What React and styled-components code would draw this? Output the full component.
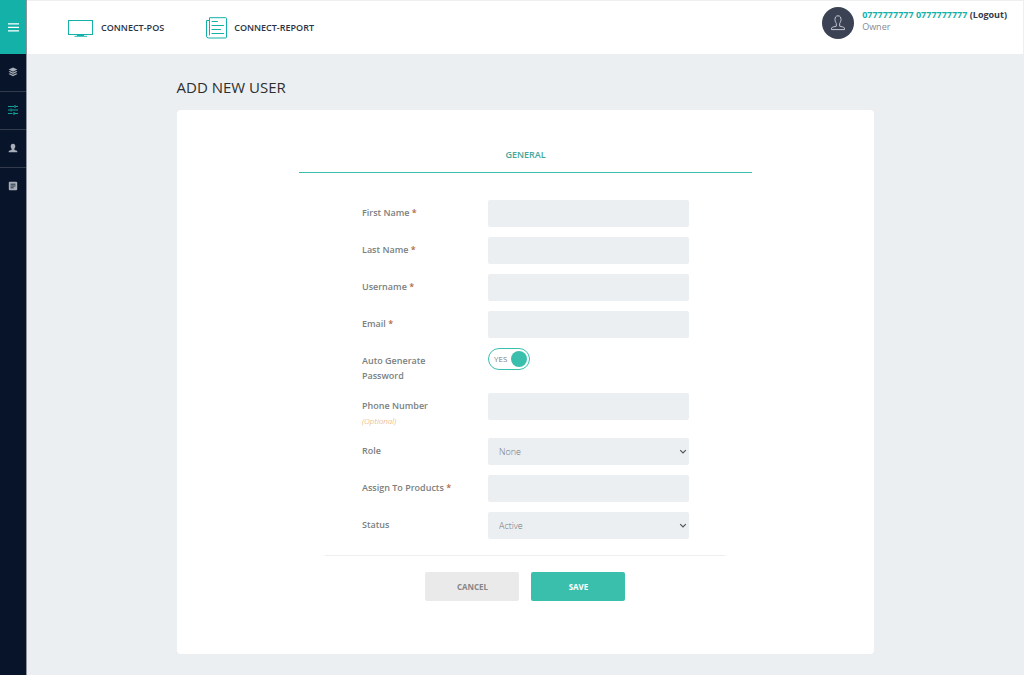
import React, { useState } from "react";
import styled, { createGlobalStyle, css } from "styled-components";

const c = {
  teal: "#3bbfad",
  brand: "#13b1a8",
  navy: "#08142a",
  page: "#ebeff2",
  field: "#ebeff2",
};

const GlobalStyle = createGlobalStyle`
  * { box-sizing: border-box; }
  body {
    margin: 0;
    background: ${c.page};
    font-family: "Open Sans", "Noto Sans", sans-serif;
    color: #333;
  }
  button, input, select { font-family: inherit; margin: 0; }
`;

const Shell = styled.div`
  display: flex;
  min-height: 100vh;
`;

const Sidebar = styled.nav`
  flex: none;
  width: 27px;
  background: ${c.navy};
  border-right: 1px solid #8d949f;
`;

const MenuButton = styled.button`
  display: flex;
  align-items: center;
  justify-content: center;
  width: 100%;
  height: 54px;
  padding: 0;
  border: 0;
  background: ${c.brand};
  color: #fff;
`;

const NavLink = styled.a`
  display: flex;
  align-items: center;
  justify-content: center;
  height: 38px;
  padding-bottom: 2px;
  color: ${(p) => (p.$active ? c.brand : "#a9afb8")};
  border-bottom: ${(p) => (p.$last ? "0" : "1px solid #323c4d")};
`;

const Page = styled.div`
  flex: 1;
  min-width: 0;
`;

const TopBar = styled.header`
  display: flex;
  justify-content: space-between;
  height: 54px;
  padding: 0 16px 0 41px;
  background: #fff;
  border-top: 1px solid #eeeff1;
  border-right: 1px solid #eeeff1;
`;

const Products = styled.div`
  display: flex;
  align-items: center;
  gap: 42px;
`;

const ProductLink = styled.a`
  display: flex;
  align-items: center;
  gap: 7px;
  font-size: 9px;
  font-weight: 600;
  line-height: 16px;
  color: #2b3346;
  text-decoration: none;
`;

const Account = styled.div`
  display: flex;
  align-items: flex-start;
  gap: 8px;
  padding-top: 6px;
`;

const Avatar = styled.div`
  display: flex;
  align-items: center;
  justify-content: center;
  width: 32px;
  height: 32px;
  border-radius: 50%;
  background: #3a4254;
`;

const AccountName = styled.div`
  padding-top: 2px;
  font-size: 9px;
  font-weight: 700;
  line-height: 12px;
  color: ${c.brand};
`;

const Logout = styled.a`
  color: #333a4a;
  text-decoration: none;
`;

const AccountRole = styled.div`
  font-size: 9px;
  line-height: 12px;
  color: #858a93;
`;

const Content = styled.main`
  width: 70%;
  margin: 0 auto;
  padding: 23px 0 20px;
`;

const Title = styled.h1`
  margin: 0 0 13px;
  font-size: 15px;
  font-weight: 500;
  line-height: 20px;
  color: #2e2e2e;
`;

const Card = styled.section`
  display: flex;
  flex-direction: column;
  align-items: center;
  padding: 36px 0 53px;
  background: #fff;
  border-radius: 4px;
`;

const Tabs = styled.div`
  display: flex;
  justify-content: center;
  width: 65%;
  padding-bottom: 8px;
  border-bottom: 1px solid ${c.teal};
`;

const Tab = styled.button`
  padding: 0;
  border: 0;
  background: none;
  font-size: 9px;
  font-weight: 600;
  line-height: 18px;
  color: #44a79c;
`;

const Form = styled.form`
  display: flex;
  flex-direction: column;
  align-items: center;
  width: 400px;
  max-width: 100%;
  margin-top: 27px;
`;

const Fields = styled.div`
  display: flex;
  flex-direction: column;
  gap: 10px;
  width: 327px;
`;

const Row = styled.div`
  display: grid;
  grid-template-columns: 126px 1fr;
  align-items: start;
`;

const LabelCell = styled.div`
  padding-top: 5px;
`;

const Label = styled.label`
  display: block;
  max-width: ${(p) => (p.$wrap ? "90px" : "none")};
  font-size: 9px;
  font-weight: 600;
  line-height: 15px;
  color: #7b7f80;
`;

const Star = styled.span`
  color: #b0683f;
`;

const Optional = styled.small`
  display: block;
  font-size: 8px;
  font-style: italic;
  font-weight: 300;
  line-height: 15px;
  color: #e89a4c;
`;

const control = css`
  display: block;
  width: 100%;
  height: 27px;
  padding: 0 11px;
  border: 0;
  border-radius: 2px;
  background: ${c.field};
  font-size: 9px;
  font-weight: 300;
  color: #6f7478;
`;

const TextInput = styled.input`
  ${control}
`;

const SelectWrap = styled.div`
  position: relative;
`;

const Select = styled.select`
  ${control}
  appearance: none;
`;

const Chevron = styled.svg`
  position: absolute;
  top: 11px;
  right: 2px;
  pointer-events: none;
`;

const Switch = styled.label`
  position: relative;
  display: flex;
  align-items: center;
  justify-content: space-between;
  flex-direction: ${(p) => (p.$on ? "row" : "row-reverse")};
  width: 42px;
  height: 22px;
  padding: 0 2px 0 5px;
  border: 1px solid ${c.teal};
  border-radius: 11px;
  font-size: 8px;
  line-height: 16px;
  color: #7c8186;
`;

const SwitchInput = styled.input`
  position: absolute;
  inset: 0;
  width: 100%;
  height: 100%;
  opacity: 0;
`;

const Knob = styled.span`
  width: 16px;
  height: 16px;
  border-radius: 50%;
  background: ${c.teal};
`;

const Actions = styled.div`
  display: flex;
  justify-content: center;
  gap: 12px;
  width: 100%;
  margin-top: 16px;
  padding-top: 16px;
  border-top: 1px solid #eeeeee;
`;

const Button = styled.button`
  width: 94px;
  height: 29px;
  padding: 0;
  border: 0;
  border-radius: 2px;
  background: ${(p) => (p.$primary ? c.teal : "#eaeaea")};
  color: ${(p) => (p.$primary ? "#fff" : "#868686")};
  font-size: 8px;
  font-weight: 700;
`;

const MenuIcon = () => (
  <svg width="11" height="9" viewBox="0 0 11 9" fill="currentColor" aria-hidden="true">
    <path d="M0 0.3h11v1.3H0zM0 3.8h11v1.3H0zM0 7.3h11v1.3H0z" />
  </svg>
);

const LayersIcon = () => (
  <svg width="10" height="10" viewBox="0 0 10 10" fill="currentColor" aria-hidden="true">
    <path d="M5 0.5L9.4 2.6 5 4.7 0.6 2.6z" />
    <path d="M1.8 4L5 5.5 8.2 4 9.4 4.7 5 6.9 0.6 4.7z" />
    <path d="M1.8 6.3L5 7.8 8.2 6.3 9.4 7 5 9.2 0.6 7z" />
  </svg>
);

const SlidersIcon = () => (
  <svg width="10" height="10" viewBox="0 0 10 10" stroke="currentColor" fill="none" aria-hidden="true">
    <path d="M0 1.5h6M7.5 1.5H10M0 5h2M3.5 5H10M0 8.5h4.5M6 8.5h4" strokeWidth="0.9" />
    <path d="M7 0v3M3 3.5v3M6 7v3" strokeWidth="1" />
  </svg>
);

const PersonIcon = () => (
  <svg width="10" height="10" viewBox="0 0 10 10" fill="currentColor" aria-hidden="true">
    <path d="M5 0.8c1.6 0 2.3 1 2.3 2.5 0 1.2-.5 2-.9 2.5v1.1l2 .5c.6.2.9.5.9 1v.8H.7v-.8c0-.5.3-.8.9-1l2-.5V5.8c-.4-.5-.9-1.300-.9-2.500C2.700 1.800 3.400.8 5 .8z" />
  </svg>
);

const NoteIcon = () => (
  <svg width="10" height="10" viewBox="0 0 10 10" aria-hidden="true">
    <rect x="0.8" y="0.8" width="8.4" height="8.4" rx="1" fill="currentColor" />
    <path d="M2.5 3.2h5M2.5 5h5M2.5 6.8h3.2" stroke={c.navy} strokeWidth="0.8" />
  </svg>
);

const MonitorIcon = () => (
  <svg width="26" height="18" viewBox="0 0 26 18" fill="none" stroke={c.brand} aria-hidden="true">
    <rect x="0.5" y="1.5" width="24" height="14" strokeWidth="1" />
    <path d="M9 16.2h7" strokeWidth="1.6" />
    <path d="M6.500 17.300h12.500" strokeWidth="0.9" />
  </svg>
);

const ReportIcon = () => (
  <svg width="21" height="22" viewBox="0 0 21 22" fill="none" stroke={c.brand} strokeWidth="1" aria-hidden="true">
    <path d="M3.500 0.700h16.200a.8.8 0 0 1 .8.8v18.500a1 1 0 0 1-1 1H2.500a2 2 0 0 1-2-2V3.500h3" />
    <path d="M3.500 0.700v17.600" />
    <path d="M6 4.500h5.500M6 8.500h11.500M6 12.500h8.500M6 16.500h11.500" strokeLinecap="round" />
  </svg>
);

const AvatarIcon = () => (
  <svg width="16" height="16" viewBox="0 0 16 16" fill="none" stroke="#c5c9d0" strokeWidth="1" aria-hidden="true">
    <path d="M8 .8c2.200 0 3 1.500 3 3.800 0 1.800-.8 2.900-1.300 3.800v2.800c1.300.7 4.300.4 4.800 1.900v1.500H1.500v-1.500c.5-1.500 3.500-1.200 4.800-1.900V8.400C5.800 7.500 5 6.400 5 4.600 5 2.300 5.800.8 8 .8z" />
  </svg>
);

function Field({ id, label, required, optional, children }) {
  return (
    <Row>
      <LabelCell>
        <Label htmlFor={id}>
          {label}
          {required && <Star> *</Star>}
        </Label>
        {optional && <Optional>(Optional)</Optional>}
      </LabelCell>
      {children || <TextInput id={id} name={id} type="text" />}
    </Row>
  );
}

function Dropdown({ id, options }) {
  return (
    <SelectWrap>
      <Select id={id} name={id}>
        {options.map((o) => (
          <option key={o}>{o}</option>
        ))}
      </Select>
      <Chevron width="8" height="6" viewBox="0 0 8 6" fill="none" stroke="#50555b" strokeWidth="1.2">
        <path d="M1.2 1.2L4 4 6.8 1.2" />
      </Chevron>
    </SelectWrap>
  );
}

export default function App() {
  const [auto, setAuto] = useState(true);
  return (
    <>
      <GlobalStyle />
      <Shell>
        <Sidebar>
          <MenuButton type="button" aria-label="Menu"><MenuIcon /></MenuButton>
          <NavLink href="#products" aria-label="Products"><LayersIcon /></NavLink>
          <NavLink href="#settings" aria-label="Settings" $active><SlidersIcon /></NavLink>
          <NavLink href="#users" aria-label="Users"><PersonIcon /></NavLink>
          <NavLink href="#notes" aria-label="Notes" $last><NoteIcon /></NavLink>
        </Sidebar>
        <Page>
          <TopBar>
            <Products>
              <ProductLink href="#pos"><MonitorIcon />CONNECT-POS</ProductLink>
              <ProductLink href="#report"><ReportIcon />CONNECT-REPORT</ProductLink>
            </Products>
            <Account>
              <Avatar><AvatarIcon /></Avatar>
              <div>
                <AccountName>
                  0777777777 0777777777 <Logout href="#logout">(Logout)</Logout>
                </AccountName>
                <AccountRole>Owner</AccountRole>
              </div>
            </Account>
          </TopBar>
          <Content>
            <Title>ADD NEW USER</Title>
            <Card>
              <Tabs><Tab type="button">GENERAL</Tab></Tabs>
              <Form onSubmit={(e) => e.preventDefault()}>
                <Fields>
                  <Field id="first-name" label="First Name" required />
                  <Field id="last-name" label="Last Name" required />
                  <Field id="username" label="Username" required />
                  <Field id="email" label="Email" required />
                  <Row>
                    <LabelCell>
                      <Label htmlFor="auto-password" $wrap>Auto Generate Password</Label>
                    </LabelCell>
                    <Switch $on={auto}>
                      <SwitchInput
                        id="auto-password"
                        type="checkbox"
                        checked={auto}
                        onChange={(e) => setAuto(e.target.checked)}
                      />
                      {auto ? "YES" : "NO"}
                      <Knob />
                    </Switch>
                  </Row>
                  <Field id="phone" label="Phone Number" optional />
                  <Field id="role" label="Role">
                    <Dropdown id="role" options={["None"]} />
                  </Field>
                  <Field id="assign" label="Assign To Products" required />
                  <Field id="status" label="Status">
                    <Dropdown id="status" options={["Active", "Inactive"]} />
                  </Field>
                </Fields>
                <Actions>
                  <Button type="button">CANCEL</Button>
                  <Button type="submit" $primary>SAVE</Button>
                </Actions>
              </Form>
            </Card>
          </Content>
        </Page>
      </Shell>
    </>
  );
}
